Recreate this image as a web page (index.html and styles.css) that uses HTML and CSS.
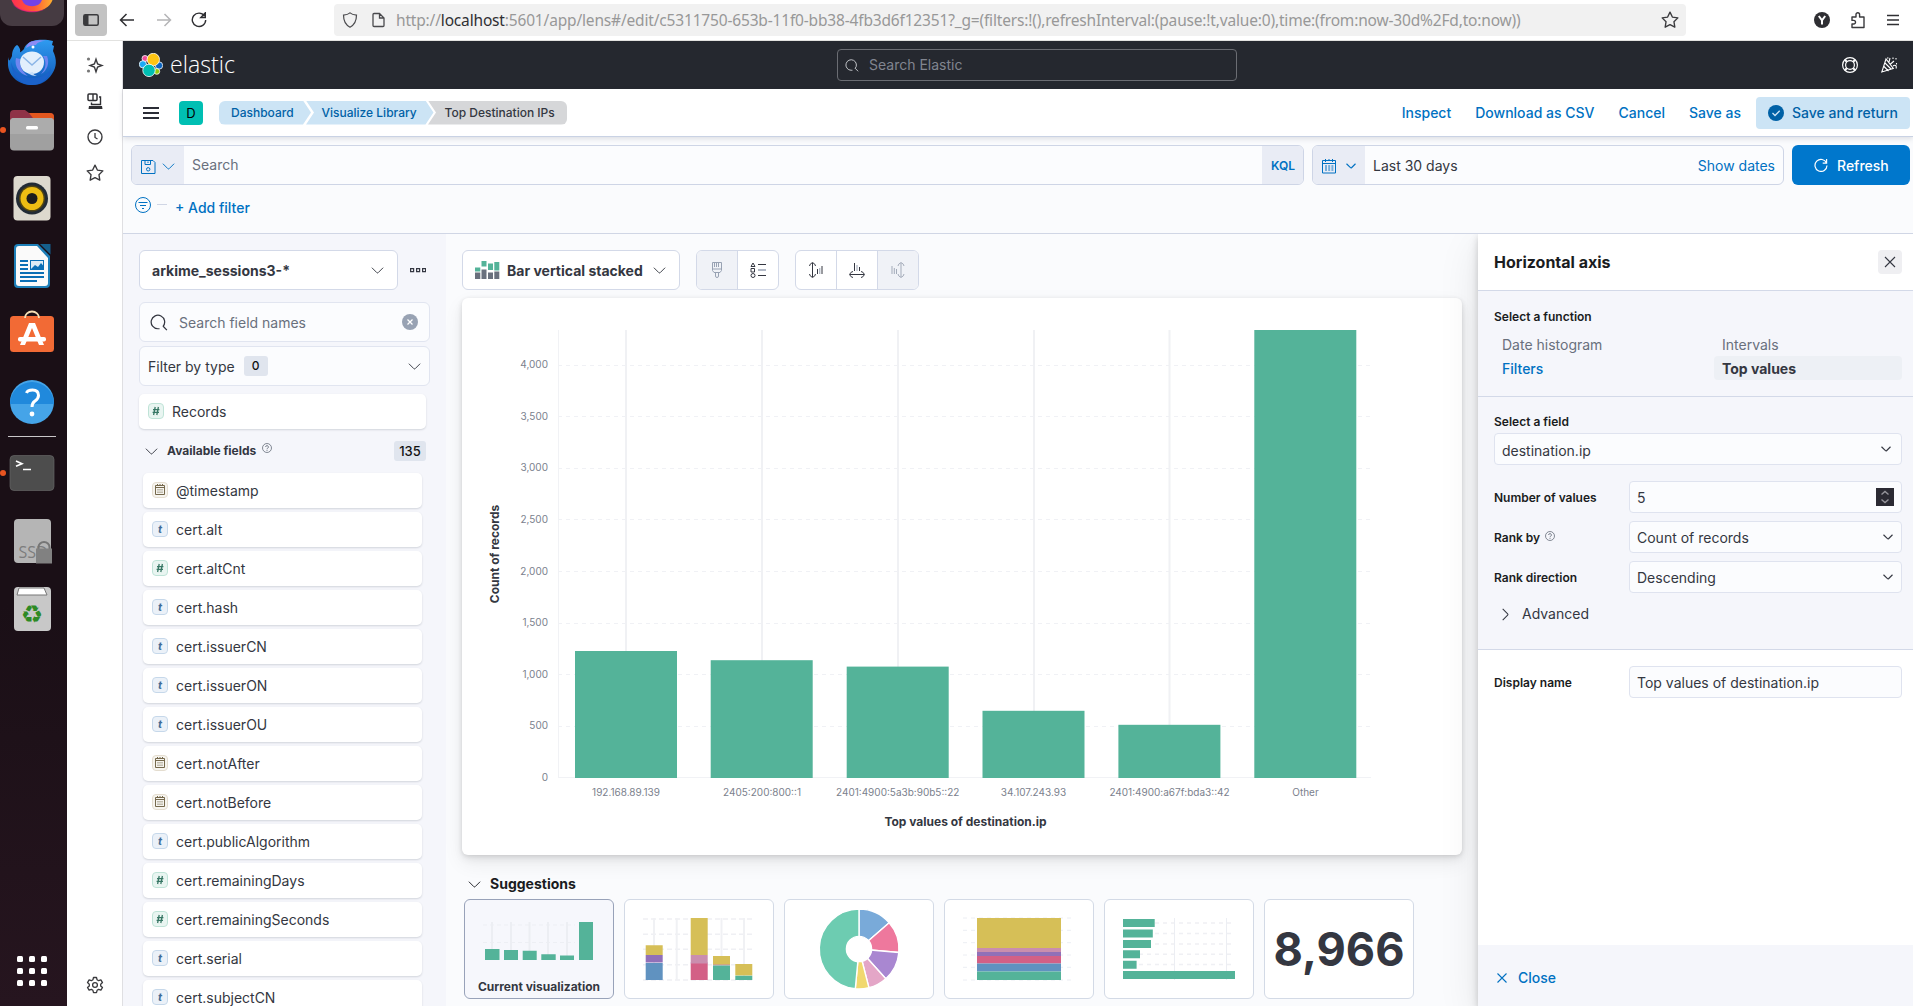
FILE: index.html
```html
<!DOCTYPE html>
<html lang="en">
<head>
<meta charset="utf-8">
<title>Lens - Elastic</title>
<link rel="stylesheet" href="styles.css">
</head>
<body>
<svg class="defs" width="0" height="0" aria-hidden="true">
  <defs>
    <symbol id="down" viewBox="0 0 16 16"><path d="M2 5l5.3 5.3a1 1 0 0 0 1.4 0L14 5" fill="none" stroke="currentColor"/></symbol>
    <symbol id="search" viewBox="0 0 16 16"><path d="M8.5 14H7A6 6 0 1 1 11.6 11.9M11.5 11.6L15 15.2" fill="none" stroke="currentColor" stroke-width="1.1"/></symbol>
    <symbol id="help" viewBox="0 0 16 16"><circle cx="8" cy="8" r="7.2" fill="none" stroke="currentColor" stroke-width="1.3"/><path d="M5.8 6.4a2.2 2.2 0 1 1 3.3 1.9C8.3 8.800 8 9 8 10M8 11.2v1.300" fill="none" stroke="currentColor" stroke-width="1.5"/></symbol>
    <symbol id="t-string" viewBox="0 0 16 16"><rect x=".5" y=".5" width="15" height="15" rx="3.5" fill="#ebf1f8" stroke="#c6d8ea"/><text x="8" y="12" text-anchor="middle" font-size="11" font-weight="700" font-style="italic" fill="#3f6c96">t</text></symbol>
    <symbol id="t-number" viewBox="0 0 16 16"><rect x=".5" y=".5" width="15" height="15" rx="3.5" fill="#e9f5f1" stroke="#bfe3d7"/><path d="M7.2 4L5.6 12M10.4 4L8.8 12M5 6.6h6.4M4.6 9.4H11" fill="none" stroke="#387765" stroke-width="1.3"/></symbol>
    <symbol id="t-date" viewBox="0 0 16 16"><rect x=".5" y=".5" width="15" height="15" rx="3.5" fill="#f6f4ef" stroke="#e4ddcf"/><path d="M3.5 3.5h9v9h-9zM3.5 5.500h9M5.500 2v1.500M8 2v1.500M10.500 2v1.500" fill="none" stroke="#75694c"/><path d="M5.500 7.500h5M5.500 9h5M5.500 10.500h5" stroke="#75694c" stroke-dasharray="1 1" stroke-width=".8"/></symbol>
    <symbol id="cal" viewBox="0 0 16 16"><path d="M1.500 2.500h13v12.500h-13zM1.500 5.500h13M4.500 1v3M8 1v1.500M11.500 1v3" fill="none" stroke="currentColor" stroke-linejoin="round"/><path d="M4 8h8.500M4 10h8.500M4 12h8.500" stroke="currentColor" stroke-dasharray="2 1.200"/></symbol>
    <symbol id="star" viewBox="0 0 16 16"><path d="M8 1l2.100 4.400 4.900.7-3.500 3.400.8 4.900L8 12.100l-4.300 2.300.8-4.900L1 6.100l4.900-.7z" fill="none" stroke="currentColor" stroke-width="1.200" stroke-linejoin="round"/></symbol>
  </defs>
</svg>

<div class="desktop">
  <aside class="dock">
    <svg class="dock-top" width="64" height="29" viewBox="0 0 64 29"><path d="M0 0h64v14a12 12 0 0 1-12 12H12A12 12 0 0 1 0 14z" fill="#463b42"/><defs><linearGradient id="ff" x1="0" x2="1"><stop offset="0" stop-color="#ff2f52"/><stop offset=".55" stop-color="#ff5a35"/><stop offset="1" stop-color="#ffb02e"/></linearGradient></defs><path d="M11.500 0a21 15 0 0 0 41 0z" fill="url(#ff)"/><path d="M12 3a21 13 0 0 0 34 6 24 14 0 0 1-34-6z" fill="#f0148c" opacity=".6"/><path d="M22 0a10.500 9 0 0 0 20 0z" fill="#7542e5"/></svg>
    <svg width="64" height="68" viewBox="0 29 64 68"><defs><linearGradient id="tb" x2="0" y2="1"><stop offset="0" stop-color="#2f9bf0"/><stop offset="1" stop-color="#0f56b8"/></linearGradient></defs><path d="M8 57c1 6 2 3 4-1 0-5 2-9 5-11 2 1 4 5 3 7 0 1 2-1 4-3 1-4 5-7 9-8 7-2 15-1 20 0l-1 4 2 1-1 5c4 8 4 16-1 23-5 8-12 11-20 11-13 0-23-8-24-20z" fill="url(#tb)"/><path d="M26 48c1-4 4-7 8-7 4-1 8-1 12 0-6 0-9 2-10 4-4 0-7 1-10 3z" fill="#8c8cf5"/><path d="M11 62c3 11 12 16 22 16 9 0 15-4 18-10-1 10-9 17-19 17-12 0-20-9-21-23z" fill="#1b62ca"/><path d="M16 58c-2 8 3 16 12 18-5-4-9-9-8-17zM43 56c4 6 3 13-2 18 6-3 9-11 6-18z" fill="#6f86f0"/><path d="M20 62a12 10.500 0 0 1 24 0c0 8-6 12-12 12-7 0-12-5-12-12z" fill="#e2effc"/><path d="M23 57l9 8 9-8" fill="none" stroke="#8bb5e6" stroke-width="1.500"/><path d="M28 73c2 2 5 3 9 3-3-1-4-2-4-4z" fill="#c8dff9"/><circle cx="33" cy="47" r="1.500" fill="#fff"/></svg>
    <svg width="64" height="68" viewBox="0 97 64 68"><circle cx="3" cy="130" r="3" fill="#e95420"/><path d="M10 125v-11q0-4 4-4h11l4 3h21q4 0 4 4v10z" fill="#8f3247"/><path d="M29 113h21q4 0 4 4v10H40z" fill="#e2571f"/><rect x="10" y="118" width="44" height="32.500" rx="4" fill="#a0a0a0"/><path d="M10 124v-2q0-4 4-4h36q4 0 4 4v12H10z" fill="#acacac"/><rect x="26" y="126" width="12" height="3.500" rx="1.500" fill="#fff"/></svg>
    <svg width="64" height="68" viewBox="0 165 64 68"><rect x="13.500" y="176" width="37" height="44.500" rx="4" fill="#ddd9ce"/><circle cx="32" cy="198.500" r="16" fill="#222b35"/><circle cx="32" cy="198.500" r="13" fill="#514512"/><circle cx="32" cy="198.500" r="11.500" fill="#edbd13"/><circle cx="32" cy="198.500" r="5.500" fill="#1d1d1d"/></svg>
    <svg width="64" height="68" viewBox="0 233 64 68"><path d="M18 244h20l12 12v28q0 4-4 4H18q-4 0-4-4v-36q0-4 4-4z" fill="#1d7fb8"/><path d="M19 246h18l11 12v25q0 3-3 3H19q-3 0-3-3v-34q0-3 3-3z" fill="#fafafa"/><path d="M40 244h10.500v10.500z" fill="#155f8c"/><path d="M20 261h8M20 265h8M20 269h8M20 273h24M20 277h24M20 281h17" stroke="#0b6fb5" stroke-width="1.800"/><rect x="30.500" y="260.500" width="13" height="9" fill="#dcebf5" stroke="#0b6fb5"/><path d="M31 269l4-4 3 2 3-4 2.500 3v3z" fill="#0b6fb5"/></svg>
    <svg width="64" height="68" viewBox="0 301 64 68"><rect x="10" y="316" width="44" height="36" rx="3.500" fill="#f26a35"/><path d="M25 318a7 6.500 0 0 1 14 0" fill="none" stroke="#f5dfb5" stroke-width="1.800"/><path d="M29 323h6l9 22h-5l-7-17-7 17h-5z" fill="#fff"/><rect x="18" y="337" width="28" height="4.500" rx="2" fill="#fff"/></svg>
    <svg width="64" height="68" viewBox="0 369 64 68"><circle cx="32" cy="402" r="22" fill="#45a4e8"/><path d="M10 404a22 22 0 0 1 44 0z" fill="#2089dc"/><path d="M26.500 393q1-3 6-3 6 0 6 5.500 0 3-3.500 5.500-3 2-3 6" fill="none" stroke="#fff" stroke-width="3"/><circle cx="32" cy="414" r="2.400" fill="#fff"/></svg>
    <hr>
    <svg width="64" height="68" viewBox="0 439 64 68"><circle cx="3" cy="473" r="3" fill="#e95420"/><rect x="10" y="455.500" width="44" height="35" rx="4" fill="#4d4d4d" stroke="#666" stroke-width=".7"/><path d="M16 461l6 2.700-6 2.600M23 469.500h8" fill="none" stroke="#fff" stroke-width="1.600"/></svg>
    <svg width="64" height="68" viewBox="0 507 64 68"><rect x="14" y="519" width="37" height="44" rx="4" fill="#b5b5b5"/><text x="18.500" y="558" class="ssd">SSD</text><path d="M38.500 549v-2a5.500 5 0 0 1 11 0v2" fill="none" stroke="#757575" stroke-width="2"/><rect x="36" y="548.500" width="16" height="15" fill="#818181"/></svg>
    <svg width="64" height="68" viewBox="0 575 64 68"><rect x="14" y="587" width="37" height="44" rx="4" fill="#c8c8c8"/><path d="M19 588h25l3 7H17z" fill="#fff" stroke="#777"/><text x="32" y="623" class="recycle">♻</text></svg>
    <svg class="apps" width="64" height="40" viewBox="0 951 64 40" fill="#fff"><rect x="17" y="956" width="6" height="6" rx="1.500"/><rect x="29" y="956" width="6" height="6" rx="1.500"/><rect x="41" y="956" width="6" height="6" rx="1.500"/><rect x="17" y="968" width="6" height="6" rx="1.500"/><rect x="29" y="968" width="6" height="6" rx="1.500"/><rect x="41" y="968" width="6" height="6" rx="1.500"/><rect x="17" y="980" width="6" height="6" rx="1.500"/><rect x="29" y="980" width="6" height="6" rx="1.500"/><rect x="41" y="980" width="6" height="6" rx="1.500"/></svg>
  </aside>

  <div class="browser">
    <div class="toolbar">
      <span class="side-btn"><svg width="16" height="12" viewBox="0 0 16 12"><rect x=".8" y=".8" width="14.400" height="10.400" rx="1.500" fill="none" stroke="#3a3a3d" stroke-width="1.500"/><rect x="1" y="1" width="4.500" height="10" fill="#3a3a3d"/></svg></span>
      <svg class="t-back" width="16" height="16" viewBox="0 0 16 16"><path d="M15 8H1.500M7.500 2L1.500 8l6 6" fill="none" stroke="#2f2f33" stroke-width="1.500"/></svg>
      <svg class="t-fwd" width="16" height="16" viewBox="0 0 16 16"><path d="M1 8h13.500M8.500 2l6 6-6 6" fill="none" stroke="#b5b5b7" stroke-width="1.500"/></svg>
      <svg class="t-rel" width="16" height="16" viewBox="0 0 16 16"><path d="M13.500 4A6.700 6.700 0 1 0 14.700 8M14.300.8v4.700H9.800z" fill="none" stroke="#2f2f33" stroke-width="1.400"/></svg>
      <div class="urlbar">
        <svg width="16" height="16" viewBox="0 0 16 16"><path d="M8 .9c2 1.700 4 2 6.500 2.200C14.500 9 12.500 13 8 15.200 3.500 13 1.500 9 1.500 3.100 4 2.900 6 2.600 8 .9z" fill="none" stroke="#4a4a4d" stroke-width="1.200"/></svg>
        <svg class="page-ic" width="13" height="16" viewBox="0 0 13 16"><path d="M1 2.500Q1 1.500 2 1.500h5.500l4.500 4.500v7.500q0 1-1 1H2q-1 0-1-1zM7.500 1.500v4.500h4.500" fill="none" stroke="#4a4a4d" stroke-width="1.300"/></svg>
        <span class="url">http://<b>localhost</b>:5601/app/lens#/edit/c5311750-653b-11f0-bb38-4fb3d6f12351?_g=(filters:!(),refreshInterval:(pause:!t,value:0),time:(from:now-30d%2Fd,to:now))</span>
        <svg class="bm" width="18" height="18"><use href="#star"/></svg>
      </div>
      <div class="ext">
        <svg width="16" height="16" viewBox="0 0 16 16"><circle cx="8" cy="8" r="8" fill="#2f2f33"/><path d="M4.800 4L8 8.300 11.200 4M8 8v4.500" fill="none" stroke="#fff" stroke-width="2"/></svg>
        <svg width="16" height="18" viewBox="0 0 16 18"><path d="M2 6h4V3.500a1.800 1.800 0 0 1 3.600 0V6H14v10.500H2V13h1.700a1.800 1.800 0 0 0 0-3.600H2z" fill="none" stroke="#3a3a3d" stroke-width="1.400" stroke-linejoin="round"/></svg>
        <svg width="14" height="12" viewBox="0 0 14 12"><path d="M1 1.500h12M1 6h12M1 10.500h12" stroke="#2f2f33" stroke-width="1.500"/></svg>
      </div>
    </div>

    <div class="under">
      <nav class="ff-side">
        <svg width="18" height="18" viewBox="0 0 18 18"><path d="M10 3.200L11.600 7.900 16 9.500 11.600 11.100 10 15.800 8.400 11.100 4 9.500 8.400 7.900z" fill="none" stroke="#3a3a3d" stroke-width="1.400"/><circle cx="2.500" cy="3" r="1.600" fill="#777"/><circle cx="2.500" cy="15" r="1.600" fill="#777"/></svg>
        <svg width="18" height="18" viewBox="0 0 18 18"><rect x="2" y="2" width="9" height="6.500" rx="1" fill="none" stroke="#2f2f33" stroke-width="1.500"/><path d="M7 2v6.500M13 5h1.500v7.500H5.500v-2" fill="none" stroke="#2f2f33" stroke-width="1.400"/><path d="M3 14h13l.5 3h-14z" fill="#2f2f33"/></svg>
        <svg width="18" height="18" viewBox="0 0 18 18"><circle cx="9" cy="9" r="7" fill="none" stroke="#3a3a3d" stroke-width="1.400"/><path d="M9 5v4.500l2.500 1.500" fill="none" stroke="#3a3a3d" stroke-width="1.300"/></svg>
        <svg width="18" height="18"><use href="#star"/></svg>
        <svg class="gear" width="18" height="18" viewBox="0 0 18 18"><path d="M7.500 1.500h3l.6 2.300 1.500.9 2.300-.8 1.600 2.700-1.800 1.600v1.700l1.800 1.600-1.600 2.700-2.300-.8-1.500.9-.6 2.300h-3l-.6-2.300-1.500-.9-2.300.8-1.600-2.700 1.800-1.600V8.200L1.500 6.600l1.600-2.700 2.300.8 1.500-.9z" fill="none" stroke="#3a3a3d" stroke-width="1.300" stroke-linejoin="round"/><circle cx="9" cy="9" r="2.400" fill="none" stroke="#3a3a3d" stroke-width="1.300"/></svg>
      </nav>

      <div class="kibana">
        <header class="k-head">
          <svg class="logo" width="24" height="24" viewBox="0 0 24 24" stroke="#fff" stroke-width=".8"><circle cx="6" cy="5.500" r="3" fill="#f04e98"/><circle cx="3.900" cy="11.300" r="3.600" fill="#1ba9f5"/><circle cx="20" cy="12.500" r="3.700" fill="#0b64c0"/><circle cx="17.800" cy="18.400" r="2.900" fill="#93c90e"/><circle cx="14.300" cy="6.500" r="6.200" fill="#fec514"/><circle cx="10" cy="17.400" r="6.200" fill="#00bfb3"/></svg>
          <svg class="word" width="74" height="44" viewBox="-2 0 74 44"><text x="0" y="30" textLength="65" lengthAdjust="spacingAndGlyphs">elastic</text></svg>
          <div class="k-search"><svg width="14" height="14"><use href="#search"/></svg>Search Elastic</div>
          <div class="k-icons">
            <svg width="16" height="16" viewBox="0 0 16 16" fill="none" stroke="#fff"><circle cx="8" cy="8" r="7.400" stroke-width="1.200"/><circle cx="8" cy="8" r="4.400" stroke-width="1.200"/><path d="M2.800 2.800l2 2M13.200 2.800l-2 2M2.800 13.200l2-2M13.200 13.200l-2-2" stroke-width="2"/></svg>
            <svg width="17" height="16" viewBox="0 0 17 16" fill="none" stroke="#fff" stroke-width="1.100"><path d="M5 2L.8 15l11.500-3.500zM4 6l6 6M3 9.500l4.500 4.500M9 7.500L13 4M9 1l-1 4M12 9c2-1.500 4-.5 3 2.500"/><path d="M12 .5v1.500M15 1v1.500M15.500 6v1.500M6 1h1.500"/></svg>
          </div>
        </header>

        <div class="k-menu">
          <span class="burger"><i></i><i></i><i></i></span>
          <span class="avatar">D</span>
          <ol class="crumbs"><li>Dashboard</li><li>Visualize Library</li><li>Top Destination IPs</li></ol>
          <div class="links"><a>Inspect</a><a>Download as CSV</a><a>Cancel</a><a>Save as</a></div>
          <span class="save"><svg width="16" height="16" viewBox="0 0 16 16"><circle cx="8" cy="8" r="8" fill="#0061a6"/><path d="M4.500 8l2.500 2.500 4.700-4.700" fill="none" stroke="#cce4f5" stroke-width="1.300"/></svg>Save and return</span>
        </div>

        <section class="query">
          <div class="q-row">
            <div class="q-box">
              <span class="q-pre"><svg width="16" height="16" viewBox="0 0 16 16" fill="none" stroke="currentColor"><path d="M1.500 1.500h11.500l2 2v11h-13.500zM5 1.500v4h5.500v-4M8 2.500v1.500"/><circle cx="8.200" cy="10.300" r="1.700"/></svg><svg width="15" height="15"><use href="#down"/></svg></span>
              <span class="q-text">Search</span>
              <span class="kql">KQL</span>
            </div>
            <div class="q-date">
              <span class="q-pre"><svg width="16" height="16"><use href="#cal"/></svg><svg class="sm" width="12" height="12"><use href="#down"/></svg></span>
              <span class="d-text">Last 30 days</span><a>Show dates</a>
            </div>
            <span class="refresh"><svg width="14" height="14" viewBox="0 0 14 14"><path d="M12.500 5A6 6 0 1 0 13 7.500M12.600 1v4.200H8.700" fill="none" stroke="#fff" stroke-width="1.200"/></svg>Refresh</span>
          </div>
          <div class="f-row"><svg width="16" height="16" viewBox="0 0 16 16" fill="none" stroke="currentColor"><circle cx="8" cy="8" r="7.500"/><path d="M3.500 5.500h9M5 8.500h6M7 11.500h2"/></svg><i></i><a>+ Add filter</a></div>
        </section>

        <div class="main">
          <aside class="fields">
            <div class="idx-row"><div class="idx">arkime_sessions3-*<svg width="15" height="15"><use href="#down"/></svg></div><svg width="16" height="5" viewBox="0 0 16 5" fill="none" stroke="#343741"><path d="M.6.6h3v3h-3zM6.600.6h3v3h-3zM12.600.6h3v3h-3z" stroke-width="1.200"/></svg></div>
            <div class="fsearch"><svg width="18" height="18"><use href="#search"/></svg><span>Search field names</span><svg width="16" height="16" viewBox="0 0 16 16"><circle cx="8" cy="8" r="8" fill="#98a2b3"/><path d="M5.500 5.500l5 5M10.500 5.500l-5 5" stroke="#fff" stroke-width="1.300"/></svg></div>
            <div class="ftype"><span>Filter by type</span><em>0</em><svg width="15" height="15"><use href="#down"/></svg></div>
            <div class="field rec"><svg width="16" height="16"><use href="#t-number"/></svg>Records</div>
            <div class="avail"><svg width="15" height="15"><use href="#down"/></svg><b>Available fields</b><svg class="q" width="10" height="10"><use href="#help"/></svg><em>135</em></div>
            <div class="list">
              <div class="field"><svg width="16" height="16"><use href="#t-date"/></svg>@timestamp</div>
              <div class="field"><svg width="16" height="16"><use href="#t-string"/></svg>cert.alt</div>
              <div class="field"><svg width="16" height="16"><use href="#t-number"/></svg>cert.altCnt</div>
              <div class="field"><svg width="16" height="16"><use href="#t-string"/></svg>cert.hash</div>
              <div class="field"><svg width="16" height="16"><use href="#t-string"/></svg>cert.issuerCN</div>
              <div class="field"><svg width="16" height="16"><use href="#t-string"/></svg>cert.issuerON</div>
              <div class="field"><svg width="16" height="16"><use href="#t-string"/></svg>cert.issuerOU</div>
              <div class="field"><svg width="16" height="16"><use href="#t-date"/></svg>cert.notAfter</div>
              <div class="field"><svg width="16" height="16"><use href="#t-date"/></svg>cert.notBefore</div>
              <div class="field"><svg width="16" height="16"><use href="#t-string"/></svg>cert.publicAlgorithm</div>
              <div class="field"><svg width="16" height="16"><use href="#t-number"/></svg>cert.remainingDays</div>
              <div class="field"><svg width="16" height="16"><use href="#t-number"/></svg>cert.remainingSeconds</div>
              <div class="field"><svg width="16" height="16"><use href="#t-string"/></svg>cert.serial</div>
              <div class="field"><svg width="16" height="16"><use href="#t-string"/></svg>cert.subjectCN</div>
            </div>
          </aside>

          <section class="work">
            <div class="tools">
              <div class="ctype"><svg width="25" height="18" viewBox="0 0 25 18"><path d="M0 11.500h5.300V18H0zM6.500 8.500h5V18h-5zM13 11.500h5V18h-5zM19.300 10.500h5V18h-5z" fill="#69707d"/><path d="M0 6.500h5.300v4H0zM6.500 0h5v5.500h-5zM13 2.500h5V9h-5zM19.300 1h5v8.500h-5z" fill="#54b399"/></svg><span>Bar vertical stacked</span><svg width="15" height="15"><use href="#down"/></svg></div>
              <div class="grp two">
                <span class="off"><svg width="16" height="16" viewBox="0 0 16 16" fill="none" stroke="#98a2b3"><path d="M3.500.5h9v8l-1.500 2H5l-1.500-2zM6.500 10.500V14q0 1.500 1.500 1.500T9.500 14v-3.500M3.500 7h9M5.500 1v4M7.500 1v4M9.500 1v4"/></svg></span>
                <span><svg width="16" height="16" viewBox="0 0 16 16" fill="none" stroke="#343741"><path d="M3 1L1 4.500h4zM1 6.500h3.500v3.500H1zM8 2.500h8M8 13.500h8"/><path d="M8 8h8" stroke="#98a2b3" stroke-width="1.500"/><circle cx="3" cy="13.500" r="2"/></svg></span>
              </div>
              <div class="grp three">
                <span><svg width="16" height="16" viewBox="0 0 16 16" fill="none" stroke="#343741"><path d="M4.500 1v14M1.500 4q0-2 3-3.500 3 1.500 3 3.500M1.500 12q0 2 3 3.500 3-1.500 3-3.500M9.500 7v5M14 4v8"/><path d="M11.800 6v6" stroke="#98a2b3"/></svg></span>
                <span><svg width="16" height="16" viewBox="0 0 16 16" fill="none" stroke="#343741"><path d="M1 12.500h14M4 9.500q-2 0-3.500 3 1.500 3 3.500 3M12 9.500q2 0 3.500 3-1.500 3-3.500 3M5.500 1v8M10.500 5v4"/><path d="M8 3v6" stroke="#98a2b3"/></svg></span>
                <span class="off"><svg width="16" height="16" viewBox="0 0 16 16" fill="none" stroke="#a3abb9"><path d="M11 1v14M8 4q0-2 3-3.500 3 1.500 3 3.500M8 12q0 2 3 3.500 3-1.500 3-3.500M2 4v8M6.500 7v5M4.300 6v6"/></svg></span>
              </div>
            </div>

            <div class="chart-card">
              <svg width="1000" height="557" viewBox="462 298 1000 557">
                <g stroke="#f0f1f5" stroke-dasharray="4 4"><path d="M558 777.500h813M558 726.500h813M558 674.500h813M558 623.500h813M558 571.500h813M558 519.500h813M558 468.500h813M558 416.500h813M558 365.500h813"/></g>
                <path d="M558.500 330v448M558 777.500h813" stroke="#f1f2f5"/>
                <path d="M626 330v448M762 330v448M898 330v448M1034 330v448M1169.500 330v448" stroke="#f0f1f4" stroke-width="2"/>
                <g fill="#54b399"><rect x="575" y="651" width="102" height="127"/><rect x="710.700" y="660.200" width="102" height="117.800"/><rect x="846.700" y="666.600" width="102" height="111.400"/><rect x="982.500" y="710.800" width="102" height="67.200"/><rect x="1118.400" y="724.800" width="102" height="53.200"/><rect x="1254.300" y="330" width="102" height="448"/></g>
                <g class="ax" text-anchor="end"><text x="548" y="781">0</text><text x="548" y="729.300">500</text><text x="548" y="677.700">1,000</text><text x="548" y="626">1,500</text><text x="548" y="574.500">2,000</text><text x="548" y="522.700">2,500</text><text x="548" y="471">3,000</text><text x="548" y="419.500">3,500</text><text x="548" y="367.800">4,000</text></g>
                <g class="ax" text-anchor="middle"><text x="626" y="796">192.168.89.139</text><text x="762" y="796">2405:200:800::1</text><text x="897.700" y="796">2401:4900:5a3b:90b5::22</text><text x="1033.500" y="796">34.107.243.93</text><text x="1169.500" y="796">2401:4900:a67f:bda3::42</text><text x="1305.500" y="796">Other</text></g>
                <text class="at" x="965.500" y="826" text-anchor="middle">Top values of destination.ip</text>
                <text class="at" transform="translate(499 554) rotate(-90)" text-anchor="middle">Count of records</text>
              </svg>
            </div>

            <div class="sug-head"><svg width="15" height="15"><use href="#down"/></svg>Suggestions</div>
            <div class="sugs">
              <div class="sug on"><svg viewBox="465 900 148 98"><path d="M483 925h92M483 942.500h92" stroke="#edeff4" stroke-dasharray="4 3"/><path d="M492 922v38M511 922v38M529.500 922v38M548 922v38M567 922v38" stroke="#eceef3" stroke-width="2"/><path fill="#54b399" d="M485 949h14.500v11H485zM504 950h14v10h-14zM522.700 950.700h14v9.300h-14zM541.300 954.300h14.400v5.700h-14.400zM560 955.500h14v4.500h-14zM579 922h14v38h-14z"/><text class="cur" x="539" y="991" text-anchor="middle">Current visualization</text></svg></div>
              <div class="sug"><svg viewBox="625 900 148 98"><path d="M643 919h109M643 934.300h109M643 949.300h109M643 964.700h109M643 980h109" stroke="#eff0f4" stroke-width="1.500" stroke-dasharray="5 3"/><path d="M654 918v62M676.700 918v62M721.500 918v62M744 918v62" stroke="#f0f1f4" stroke-width="2"/><path fill="#d6bf57" d="M645.700 945.300h17v9.700h-17zM690.700 918h17v37h-17zM713 956h17v9h-17zM735.300 964h17v11.500h-17z"/><path fill="#9170b8" d="M645.700 955h17v7.500h-17zM690.700 962.500h17v1h-17z"/><path fill="#6092c0" d="M645.700 963h17v17h-17z"/><path fill="#ca8eae" d="M690.700 955h17v8h-17zM713 964.500h17v1h-17z"/><path fill="#d36086" d="M690.700 963.300h17V980h-17z"/><path fill="#54b399" d="M713 965.500h17V980h-17zM735.300 975.700h17v4.300h-17z"/></svg></div>
              <div class="sug"><svg viewBox="785 900 148 98"><g transform="translate(859 949)" stroke="#fff" stroke-width="1.400"><path fill="#79aad9" d="M0 0V-40A40 40 0 0 1 30.200-26.200z"/><path fill="#ee789d" d="M0 0L30.200-26.200A40 40 0 0 1 39.850 3.500z"/><path fill="#a987d1" d="M0 0L39.850 3.500A40 40 0 0 1 26.800 29.700z"/><path fill="#e4a6c7" d="M0 0L26.800 29.700A40 40 0 0 1 9.900 38.700z"/><path fill="#f1d86f" d="M0 0L9.900 38.700A40 40 0 0 1-3.700 39.800z"/><path fill="#6dccb1" d="M0 0L-3.700 39.800A40 40 0 0 1 0-40z"/><circle r="12.600" fill="#fff"/></g></svg></div>
              <div class="sug"><svg viewBox="945 900 148 98"><path d="M963 918h109M963 930.300h109M963 942.700h109M963 955h109M963 967.300h109M963 980h109" stroke="#eceef3" stroke-dasharray="4 4"/><path fill="#d6bf57" d="M977 918h84v30h-84z"/><path fill="#ca8eae" d="M977 948h84v4h-84z"/><path fill="#9170b8" d="M977 952h84v4h-84z"/><path fill="#d36086" d="M977 956h84v7.500h-84z"/><path fill="#6092c0" d="M977 963.500h84v8h-84z"/><path fill="#54b399" d="M977 971.500h84v8.500h-84z"/></svg></div>
              <div class="sug"><svg viewBox="1105 900 148 98"><path d="M1123 923h108M1123 933.500h108M1123 944h108M1123 954.300h108M1123 964.500h108" stroke="#eff0f4" stroke-width="1.500" stroke-dasharray="4 4"/><path d="M1174.500 918v62M1226.500 918v62" stroke="#eceef3"/><path fill="#54b399" d="M1123 919h31.700v8H1123zM1123 929.500h29.800v8H1123zM1123 940h28v8h-28zM1123 950.200h17v8h-17zM1123 960.700h13.600v8H1123zM1123 971h112v8h-112z"/></svg></div>
              <div class="sug"><svg viewBox="1265 900 148 98"><text class="big" x="1339" y="966" text-anchor="middle" textLength="131" lengthAdjust="spacingAndGlyphs">8,966</text></svg></div>
            </div>
          </section>

          <aside class="flyout">
            <div class="fl-head"><h2>Horizontal axis</h2><span><svg width="12" height="12" viewBox="0 0 12 12"><path d="M1 1l10 10M11 1L1 11" stroke="#343741" stroke-width="1.100"/></svg></span></div>
            <div class="fl-fn"><label>Select a function</label>
              <div class="fns"><span class="dim">Date histogram</span><span class="dim">Intervals</span><span class="lnk">Filters</span><span class="sel">Top values</span></div>
            </div>
            <div class="fl-form">
              <label>Select a field</label>
              <div class="inp full">destination.ip<svg width="12" height="12"><use href="#down"/></svg></div>
              <div class="row"><label>Number of values</label><div class="inp">5<span class="spin"><svg width="18" height="18" viewBox="0 0 18 18"><path d="M5.500 6.500l3.500-3 3.500 3M5.500 11.500l3.500 3 3.500-3" fill="none" stroke="#96959c" stroke-width="1.400"/></svg></span></div></div>
              <div class="row"><label>Rank by<svg width="10" height="10"><use href="#help"/></svg></label><div class="inp">Count of records<svg width="12" height="12"><use href="#down"/></svg></div></div>
              <div class="row"><label>Rank direction</label><div class="inp">Descending<svg width="12" height="12"><use href="#down"/></svg></div></div>
              <div class="adv"><svg width="15" height="15" viewBox="0 0 16 16"><path d="M5 2l5.300 5.300a1 1 0 0 1 0 1.400L5 14" fill="none" stroke="#343741" stroke-width="1.100"/></svg>Advanced</div>
            </div>
            <div class="fl-name"><div class="row"><label>Display name</label><div class="inp">Top values of destination.ip</div></div></div>
            <div class="fl-foot"><svg width="12" height="12" viewBox="0 0 12 12"><path d="M1.500 1.500l9 9M10.500 1.500l-9 9" stroke="#0071c2" stroke-width="1.100"/></svg>Close</div>
          </aside>
        </div>
      </div>
    </div>
  </div>
</div>
</body>
</html>
```

FILE: styles.css
```css
* { box-sizing: border-box; }
html, body { margin: 0; height: 100%; overflow: hidden; }
body { font: 14px/20px Inter, "Liberation Sans", sans-serif; color: #343741; background: #fff; }
svg { flex: none; display: block; }
.defs { display: none; }
em { font-style: normal; }
.desktop { display: flex; width: 1913px; height: 1006px; }

.dock { width: 67px; flex: none; display: flex; flex-direction: column; background: linear-gradient(#1a0f16 60%, #26151f); }
.dock hr { width: 48px; height: 2px; margin: -1px 0 1px 8px; border: 0; background: linear-gradient(#c9c6c8 50%, transparent 50%); }
.dock .apps { margin-top: auto; margin-bottom: 15px; }
.ssd { font: 16px "Open Sans", sans-serif; fill: #7d7d7d; }
.recycle { font: 25px "DejaVu Sans", sans-serif; fill: #2d8a24; text-anchor: middle; }

.browser { flex: 1; min-width: 0; display: flex; flex-direction: column; }
.toolbar { height: 41px; flex: none; display: flex; align-items: center; padding: 0 13px 1px 8px; border-bottom: 1px solid #e2e2e0; color: #3a3a3d; }
.side-btn { width: 32px; height: 32px; border-radius: 4px; background: #c3c3c3; display: grid; place-items: center; }
.t-back { margin-left: 12px; }
.t-fwd { margin-left: 21px; }
.t-rel { margin-left: 19px; }
.urlbar { margin-left: 127px; width: 1352px; height: 32px; border-radius: 4px; background: #f1f1f1; display: flex; align-items: center; padding: 0 7px 0 8px; }
.page-ic { margin-left: 14px; }
.url { margin-left: 11px; width: 1140px; white-space: nowrap; font: 15.5px/32px "Noto Sans", sans-serif; letter-spacing: -.17px; color: #989898; }
.url b { font-weight: 400; color: #2f2f33; }
.bm { margin-left: auto; }
.ext { margin-left: auto; display: flex; align-items: center; gap: 20px; }

.under { flex: 1; min-height: 0; display: flex; }
.ff-side { width: 56px; flex: none; display: flex; flex-direction: column; align-items: center; gap: 18px; padding: 15px 0 12px; border-right: 1px solid #dfdfe2; color: #3a3a3d; }
.ff-side .gear { margin-top: auto; }
.kibana { flex: 1; min-width: 0; display: flex; flex-direction: column; background: #fafbfd; }

.k-head { height: 48px; flex: none; display: flex; align-items: center; background: #25282f; padding: 0 15px 0 16px; }
.word { margin-left: 5px; }
.word text { font: 300 24px "Open Sans", sans-serif; fill: #fff; }
.k-search { margin-left: 595px; width: 400px; height: 32px; border: 1px solid #6b6d73; border-radius: 4px; display: flex; align-items: center; gap: 10px; padding-left: 7px; color: #81858f; }
.k-search svg { color: #c6c8cc; }
.k-icons { margin-left: auto; display: flex; gap: 23px; }

.k-menu { position: relative; z-index: 2; height: 48px; flex: none; display: flex; align-items: center; background: #fff; border-bottom: 1px solid #c9d2e4; padding: 0 3px 0 20px; box-shadow: 0 2px 5px rgba(60,70,90,.15); }
.burger { display: grid; gap: 3px; width: 16px; }
.burger i { height: 2px; background: #2b2d36; }
.avatar { margin-left: 20px; width: 24px; height: 24px; border-radius: 4px; background: #00bfb3; color: #000; font-size: 13px; text-align: center; line-height: 24px; }
.crumbs { margin: 0 0 0 16px; padding: 0; display: flex; list-style: none; font-size: 12px; font-weight: 500; line-height: 24px; }
.crumbs li { background: #cce4f5; color: #0061a6; height: 24px; white-space: nowrap; }
.crumbs li:nth-child(1) { width: 92px; padding-left: 12px; border-radius: 6px 0 0 6px; clip-path: polygon(0 0, 84px 0, 92px 50%, 84px 100%, 0 100%); }
.crumbs li:nth-child(2) { width: 128px; margin-left: -5px; padding-left: 15.5px; clip-path: polygon(0 0, 119.5px 0, 127.5px 50%, 119.5px 100%, 0 100%, 8px 50%); }
.crumbs li:nth-child(3) { width: 139px; margin-left: -6px; padding-left: 16.5px; background: #d6d7d9; color: #343741; border-radius: 0 6px 6px 0; clip-path: polygon(0 0, 100% 0, 100% 100%, 0 100%, 8px 50%); }
.links { margin-left: auto; display: flex; gap: 24px; color: #0071c2; font-weight: 500; }
.save { margin-left: 15px; width: 154px; height: 32px; border-radius: 4px; background: #cce4f5; color: #0061a6; font-weight: 500; display: flex; align-items: center; gap: 8px; padding-left: 12px; white-space: nowrap; }

.query { height: 97px; flex: none; border-bottom: 1px solid #d0d6e5; padding: 8px 3px 0 8px; background: #fafbfd; color: #0071c2; }
.q-row { display: flex; gap: 8px; height: 40px; }
.q-box, .q-date { display: flex; align-items: center; border: 1px solid #ced5e6; border-radius: 6px; background: #fbfcfe; overflow: hidden; }
.q-box { width: 1173px; }
.q-date { width: 472px; padding-right: 8px; }
.q-pre { align-self: stretch; width: 52px; background: #e9ecf5; display: flex; align-items: center; gap: 5px; padding: 3px 0 0 8px; }
.q-date .q-pre { padding-top: 1px; gap: 8px; padding-left: 8px; }
.q-text { margin-left: 8px; color: #69707d; flex: 1; }
.kql { width: 41px; align-self: stretch; background: #e9ecf5; font-size: 12px; font-weight: 600; line-height: 40px; text-align: center; padding-left: 1px; }
.d-text { margin-left: 8px; flex: 1; color: #343741; padding-top: 2px; }
.q-date a { padding-top: 2px; }
.refresh { width: 118px; border-radius: 6px; background: #0077cc; color: #fff; font-weight: 500; display: flex; align-items: center; gap: 9px; padding: 2px 0 0 22px; }
.refresh svg { margin-top: -2px; }
.f-row { display: flex; padding: 12px 0 0 4px; font-weight: 500; }
.f-row i { width: 10px; height: 1px; background: #d0d6e5; margin: 7px 8px 0 6px; }
.f-row a { margin-top: 1px; }

/* thin chevrons get a heavier stroke at the small size */
.sm, .inp svg { stroke-width: 1.5px; }

.main { flex: 1; min-height: 0; display: flex; }
.fields { width: 323px; flex: none; padding: 16px 16px 0; background: #f5f6fb; overflow: hidden; }
.idx-row { display: flex; align-items: center; }
.idx { width: 259px; height: 40px; border: 1px solid #d3d9e8; border-radius: 6px; background: #fff; display: flex; align-items: center; justify-content: space-between; padding: 2px 12px 0 12px; font-weight: 700; }
.idx svg { margin-top: -2px; }
.idx-row > svg { margin-left: 12px; }
.fsearch, .ftype { height: 40px; border: 1px solid #e1e5f0; border-radius: 6px; background: #fbfcfe; display: flex; align-items: center; }
.fsearch { margin-top: 12px; padding: 0 11px 0 10px; }
.fsearch span { flex: 1; margin-left: 11px; padding-top: 2px; color: #69707d; }
.ftype { margin-top: 4px; padding: 0 7px 0 8px; }
.ftype span { padding-top: 2px; }
.ftype svg { margin-left: auto; }
.ftype em, .avail em { height: 20px; border-radius: 3px; background: #e0e5ee; color: #111; font-size: 12px; font-weight: 500; text-align: center; line-height: 20px; }
.ftype em { width: 24px; margin-left: 9px; }
.field { height: 35px; background: #fff; border-radius: 5px; display: flex; align-items: center; gap: 8px; padding: 1px 9px 0; box-shadow: 0 1px 2px rgba(50,60,80,.18); }
.field svg { margin-top: -2px; }
.rec { width: 287px; margin-top: 8px; }
.avail { width: 287px; height: 20px; margin-top: 12px; display: flex; align-items: center; padding-left: 5px; font-size: 12px; }
.avail b { margin-left: 8px; font-weight: 700; }
.avail .q { margin: -7px 0 0 6px; color: #69707d; }
.avail em { width: 32px; margin-left: auto; font-size: 13px; }
.list { width: 279px; margin: 12px 0 0 4px; display: grid; gap: 4px; }

.work { flex: 1; min-width: 0; padding: 16px; }
.tools { display: flex; gap: 16px; height: 40px; }
.ctype { width: 218px; border: 1px solid #d3d9e8; border-radius: 6px; background: #fff; display: flex; align-items: center; gap: 7px; padding-left: 12px; font-weight: 700; white-space: nowrap; }
.ctype span { padding-top: 2px; }
.ctype svg:first-child { margin-top: -1px; }
.ctype svg:last-child { margin-left: 2px; }
.grp { display: flex; border: 1px solid #d3d9e8; border-radius: 6px; background: #fff; overflow: hidden; }
.two { width: 83px; }
.three { width: 124px; }
.grp span { flex: 1; display: grid; place-items: center; }
.grp span + span { border-left: 1px solid #d3d9e8; }
.grp .off { background: #f0f2f7; }
.chart-card { width: 1000px; height: 557px; margin-top: 8px; background: #fff; border-radius: 6px; box-shadow: 0 1px 4px rgba(0,0,0,.1), 0 4px 8px rgba(0,0,0,.07), 0 8px 20px rgba(0,0,0,.07); }
.ax { font-size: 10px; fill: #7b818d; }
.at { font-size: 12px; font-weight: 700; fill: #343741; }
.sug-head { display: flex; align-items: center; gap: 8px; height: 24px; margin: 17px 0 0 5px; font-weight: 700; color: #1a1c21; }
.sugs { display: flex; gap: 10px; margin: 3px 0 0 2px; }
.sug { width: 150px; height: 100px; flex: none; border: 1px solid #d3dae6; border-radius: 6px; background: #fff; overflow: hidden; }
.sug svg { width: 148px; height: 98px; }
.on { background: #f6f7fc; border-color: #98a2b9; }
.cur { font-size: 12px; font-weight: 700; fill: #343741; }
.big { font-size: 46.5px; font-weight: 700; fill: #343741; }

.flyout { position: relative; z-index: 1; width: 435px; flex: none; background: #fff; display: flex; flex-direction: column; color: #343741; box-shadow: 0 2px 6px rgba(0,0,0,.13), 0 6px 12px rgba(0,0,0,.09), 0 12px 40px rgba(0,0,0,.09); clip-path: inset(0 0 0 -80px); }
.fl-head { height: 57px; display: flex; align-items: center; justify-content: space-between; padding: 0 11px 0 16px; border-bottom: 1px solid #d3d9e8; }
.fl-head h2 { margin: 0; font-size: 16px; font-weight: 700; color: #1a1c21; }
.fl-head span { width: 24px; height: 24px; border-radius: 4px; background: #efeff2; display: grid; place-items: center; }
label { display: flex; align-items: center; font-size: 12px; font-weight: 600; color: #1a1c21; line-height: 18px; }
label svg { margin: -3px 0 0 5px; color: #69707d; }
.fl-fn { height: 106px; padding: 17px 11px 0 16px; background: #f5f6fb; border-bottom: 1px solid #d3d9e8; }
.fns { display: grid; grid-template-columns: 188px 188px; column-gap: 32px; margin-top: 6px; }
.fns span { height: 24px; line-height: 23px; padding: 1px 0 0 8px; border-radius: 4px; }
.dim { color: #69707d; }
.lnk { color: #0071c2; font-weight: 500; }
.sel { background: #edf0f5; font-weight: 700; }
.fl-form { height: 253px; padding: 16px 11px 0 16px; background: #f5f6fb; border-bottom: 1px solid #d3d9e8; }
.inp { width: 273px; height: 32px; border: 1px solid #dfe3ef; border-radius: 4px; background: #fbfcfe; display: flex; align-items: center; justify-content: space-between; padding: 2px 7px 0; }
.inp svg { margin-top: -2px; }
.full { width: 408px; margin: 2px 0 16px; padding-top: 3px; padding-right: 9px; }
.full svg { margin-top: -4px; }
.row { display: flex; align-items: center; justify-content: space-between; margin-bottom: 8px; }
.row label { padding-top: 1px; }
.spin { background: #2b2a33; margin-top: -2px; }
.spin svg { margin: 0; }
.adv { display: flex; align-items: center; gap: 9px; padding: 3px 0 0 4px; }
.fl-name { padding: 16px 11px 0 16px; }
.fl-foot { margin-top: auto; height: 61px; background: #f5f6fb; color: #0071c2; font-weight: 500; display: flex; align-items: center; gap: 10px; padding: 5px 0 0 18px; }
```
